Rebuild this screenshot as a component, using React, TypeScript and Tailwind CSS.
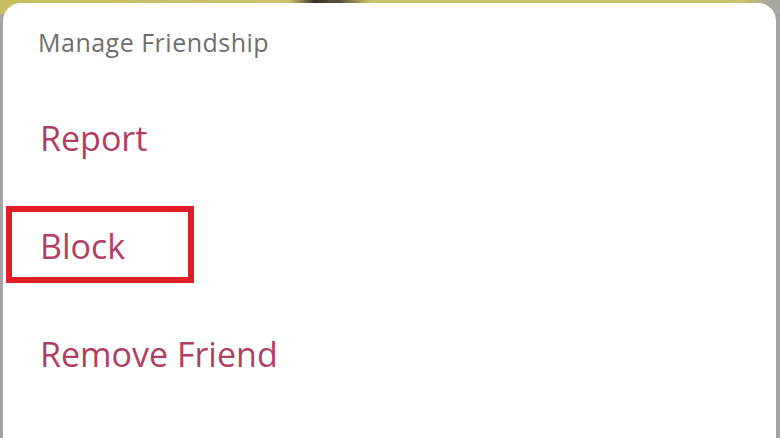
const items = ['Report', 'Block', 'Remove Friend']

export default function App() {
  return (
    <div
      className="flex h-[438px] w-[780px] flex-col overflow-hidden bg-[#a4a4a4] pl-[3px] pr-[4px] pt-[3px]"
      style={{
        backgroundImage:
          'linear-gradient(to bottom, transparent 14px, #a4a4a4 14px), linear-gradient(to right, #c6bf62 0, #c9c266 290px, #3a3428 315px, #5b5236 340px, #c9c266 370px, #c9c266 740px, #a8a8a0 770px)',
      }}
    >
      <div className="flex-1 rounded-t-[18px] bg-white font-['Open_Sans',sans-serif]">
        <div className="h-[81px] pl-[35px] pt-[24px] text-[25px] leading-[30px] tracking-[0.02em] text-[#6e6e6e]">
          Manage Friendship
        </div>
        {items.map(label => (
          <div key={label} className="relative flex h-[108px] items-center pl-[37px]">
            <span className="text-[34px] leading-[40px] text-[#b23d66]">{label}</span>
            {label === 'Block' && (
              <div className="pointer-events-none absolute left-[3px] top-[14px] h-[77px] w-[188px] border-[6px] border-[#e11d27]" />
            )}
          </div>
        ))}
      </div>
    </div>
  )
}
